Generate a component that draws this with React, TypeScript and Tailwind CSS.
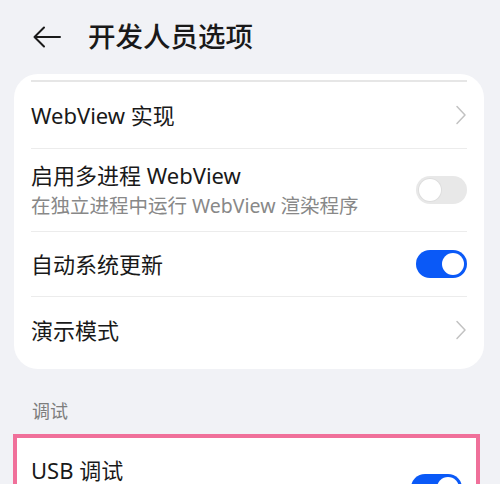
import { ReactNode } from "react";

const font = { fontFamily: '"Noto Sans", "Noto Sans CJK SC", sans-serif' };

function Chevron() {
  return (
    <svg width="12" height="20" viewBox="0 0 12 20" fill="none" className="shrink-0">
      <path d="M2 1.5 L10 10 L2 18.5" stroke="#c2c2c2" strokeWidth="1.5" strokeLinecap="round" strokeLinejoin="round" />
    </svg>
  );
}

function Toggle({ on }: { on: boolean }) {
  return (
    <div
      className={`w-[51px] h-[28px] rounded-full p-[3px] flex shrink-0 ${
        on ? "bg-[#0a59f7] justify-end" : "bg-[#e8e8e8] justify-start"
      }`}
    >
      <div className={`w-[22px] h-[22px] rounded-full bg-white ${on ? "" : "shadow-[0_0_0_1px_#dedede]"}`} />
    </div>
  );
}

function Row({ children, right, h, last }: { children: ReactNode; right: ReactNode; h: string; last?: boolean }) {
  return (
    <div className={`flex items-center justify-between ${h} ${last ? "" : "border-b border-[#ececec]"}`}>
      <div className="flex flex-col">{children}</div>
      {right}
    </div>
  );
}

export default function App() {
  return (
    <div className="w-[500px] h-[484px] overflow-hidden bg-[#f1f2f6]" style={font}>
      <div className="h-[74px] flex items-center pl-[33px]">
        <svg width="28" height="22" viewBox="0 0 28 22" fill="none">
          <path d="M11 1.5 L1.5 11 L11 20.5 M1.5 11 H27" stroke="#1a1a1a" strokeWidth="2" strokeLinecap="round" strokeLinejoin="round" />
        </svg>
        <span className="ml-[27px] text-[27.5px] font-medium text-[#191919] leading-none">开发人员选项</span>
      </div>

      <div className="ml-[14px] mr-[16px] bg-white rounded-[24px] px-[17px] pt-[6px] pb-[6px]">
        <div className="h-[2px] bg-[#e6e6e6]" />
        <Row h="h-[67px]" right={<Chevron />}>
          <span className="text-[22px] text-[#191919] leading-none">WebView 实现</span>
        </Row>
        <Row h="h-[83px]" right={<Toggle on={false} />}>
          <span className="text-[22px] text-[#191919] leading-none">启用多进程 WebView</span>
          <span className="text-[19.5px] text-[#888888] leading-none mt-[10px]">在独立进程中运行 WebView 渲染程序</span>
        </Row>
        <Row h="h-[65px]" right={<Toggle on />}>
          <span className="text-[22px] text-[#191919] leading-none">自动系统更新</span>
        </Row>
        <Row h="h-[66px]" right={<Chevron />} last>
          <span className="text-[22px] text-[#191919] leading-none">演示模式</span>
        </Row>
      </div>

      <div className="h-[65px] flex items-center pl-[32px] pt-[24px] pb-[6px]">
        <span className="text-[18px] text-[#7d7d7d] leading-none">调试</span>
      </div>

      <div className="ml-[13px] mr-[20px] bg-white border-[4px] border-[#f0709a] px-[14px]">
        <div className="h-[70px] flex items-start justify-between">
          <span className="text-[22px] text-[#191919] leading-none mt-[21px]">USB 调试</span>
          <div className="mt-[36px]">
            <Toggle on />
          </div>
        </div>
      </div>
    </div>
  );
}
